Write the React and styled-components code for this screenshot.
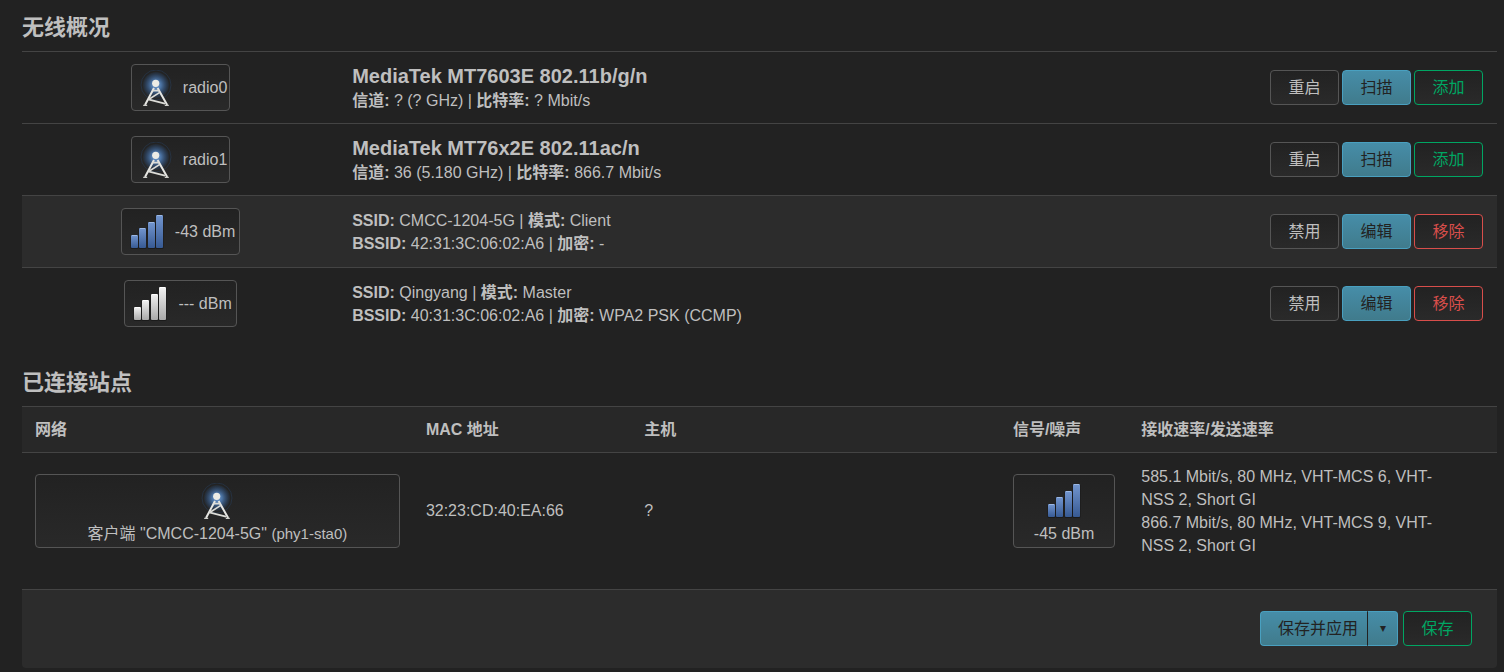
import React, { useId } from 'react';
import styled, { createGlobalStyle } from 'styled-components';

const GlobalStyle = createGlobalStyle`
  * {
    box-sizing: border-box;
  }

  body {
    margin: 0;
    background: #222;
    color: #bfbfbf;
    font-family: "Liberation Sans", "Noto Sans CJK SC", sans-serif;
    font-size: 16px;
    line-height: 23px;
  }
`

const Page = styled.main`
  padding: 0 7px 4px 22px;
`

const Title = styled.h3`
  margin: 0;
  padding: ${props => props.$first ? '12px' : '28px'} 0 8px;
  font-size: 22px;
  line-height: 31px;
  font-weight: bold;
`

const Table = styled.table`
  width: 100%;
  border-collapse: separate;
  border-spacing: 0;
  table-layout: fixed;
`

const Col = styled.col`
  width: ${props => props.$width};
`

const WifiRow = styled.tr`
  height: 72px;
  background: ${props => props.$raised ? '#2c2c2c' : 'transparent'};
`

const Cell = styled.td`
  padding: 0 13px;
  border-top: 1px solid #444;
  text-align: ${props => props.$align || 'left'};
  vertical-align: middle;
`

const HeadCell = styled.th`
  height: 46px;
  padding: 0 13px;
  border-top: 1px solid #444;
  background: #282828;
  text-align: left;
  font-weight: bold;
`

const StationCell = styled(Cell)`
  height: 116px;
`

const RateCell = styled(StationCell)`
  padding-right: 44px;
`

const Badge = styled.span`
  display: inline-flex;
  align-items: center;
  gap: 11px;
  height: 47px;
  padding: 0 ${props => props.$end} 0 8px;
  border: 1px solid #555;
  border-radius: 4px;
  background: linear-gradient(#222, #292929);
  vertical-align: middle;
  white-space: nowrap;
`

const TallBadge = styled.span`
  display: flex;
  flex-direction: column;
  align-items: center;
  gap: 3px;
  height: 74px;
  padding-top: 8px;
  border: 1px solid #555;
  border-radius: 4px;
  background: linear-gradient(#222, #292929);
  white-space: nowrap;
`

const Small = styled.span`
  font-size: 15px;
`

const Device = styled.div`
  font-size: 20px;
  line-height: 25px;
  font-weight: bold;
`

const Actions = styled.div`
  display: flex;
  justify-content: flex-end;
  gap: 3px;
  padding-right: 1px;
`

const Button = styled.button`
  width: 69px;
  height: 35px;
  padding: 0;
  border: 1px solid #555;
  border-radius: 4px;
  background: linear-gradient(#222, #2a2a2a);
  color: #bfbfbf;
  font: inherit;
  line-height: 31px;
  white-space: nowrap;
  cursor: pointer;
`

const PrimaryButton = styled(Button)`
  border-color: #49a0c0;
  background: linear-gradient(#468da8, #407b8c);
  color: #222;
`

const PositiveButton = styled(Button)`
  border-color: #00a663;
  color: #00a663;
`

const NegativeButton = styled(Button)`
  border-color: #d84e4b;
  color: #d84e4b;
`

const PageActions = styled.div`
  display: flex;
  justify-content: flex-end;
  gap: 5px;
  margin-top: 21px;
  padding: 21px 25px 22px;
  border-top: 1px solid #444;
  border-radius: 0 0 4px 4px;
  background: #2c2c2c;
`

const SplitButton = styled.div`
  display: flex;
`

const ApplyButton = styled(PrimaryButton)`
  width: auto;
  padding: 0 9px 0 17px;
  border-right: 1px solid #222;
  border-radius: 4px 0 0 4px;
`

const MenuButton = styled(PrimaryButton)`
  width: 30px;
  border-left: 0;
  border-radius: 0 4px 4px 0;
  font-size: 12px;
`

function Antenna() {
  const id = useId();
  return (
    <svg width="32" height="36" viewBox="0 -2 32 36" fill="none" aria-hidden="true">
      <defs>
        <radialGradient id={id}>
          <stop offset="0" stopColor="#7ba6dc" />
          <stop offset="0.4" stopColor="#4f7bb0" stopOpacity="0.9" />
          <stop offset="0.75" stopColor="#345580" stopOpacity="0.6" />
          <stop offset="1" stopColor="#274468" stopOpacity="0.2" />
        </radialGradient>
      </defs>
      <circle cx="16" cy="13" r="13" fill={`url(#${id})`} />
      <circle cx="16" cy="13" r="15" stroke="#284b76" strokeOpacity="0.35" />
      <path d="M14 16 5 33M17.6 16l9.6 17" stroke="#e6e6e2" strokeWidth="2" />
      <path d="M3.2 33.3h4M24.8 33.3h4" stroke="#d0d0cb" strokeWidth="1.2" />
      <path d="M12.4 18.6h7M19.8 20.4 9.4 27M8.2 27.4l16.8 4.2" stroke="#dcdcd7" strokeWidth="1.6" />
      <circle cx="15.7" cy="11.3" r="3.6" fill="#ecece6" />
    </svg>
  )
}

const barShapes = [
  { x: 1, y: 21 },
  { x: 9, y: 14 },
  { x: 18, y: 8 },
  { x: 26, y: 1 },
];

function SignalBars({ active }) {
  const id = useId();
  return (
    <svg width="34" height="36" viewBox="0 0 34 36" aria-hidden="true">
      <defs>
        <linearGradient id={id} x1="0" y1="0" x2="0" y2="1">
          <stop offset="0" stopColor={active ? '#7396cf' : '#f2f2f2'} />
          <stop offset="1" stopColor={active ? '#375a93' : '#a9a9a9'} />
        </linearGradient>
      </defs>
      {barShapes.map(({ x, y }) => (
        <g key={x}>
          <rect x={x - 0.5} y={y + 0.5} width="8" height={34.5 - y} rx="1.5" fill="#111" fillOpacity="0.55" />
          <rect x={x} y={y} width="7" height={34 - y} rx="1" fill={`url(#${id})`} />
          <rect x={x + 1} y={y} width="5" height="1" fill={active ? '#9cb8e3' : '#fff'} />
        </g>
      ))}
    </svg>
  )
}

const radios = [
  { name: 'radio0', device: 'MediaTek MT7603E 802.11b/g/n', channel: '? (? GHz)', bitrate: '? Mbit/s' },
  { name: 'radio1', device: 'MediaTek MT76x2E 802.11ac/n', channel: '36 (5.180 GHz)', bitrate: '866.7 Mbit/s' },
];

const networks = [
  { signal: '-43 dBm', active: true, ssid: 'CMCC-1204-5G', mode: 'Client', bssid: '42:31:3C:06:02:A6', encryption: '-' },
  { signal: '--- dBm', active: false, ssid: 'Qingyang', mode: 'Master', bssid: '40:31:3C:06:02:A6', encryption: 'WPA2 PSK (CCMP)' },
];

function RadioRow({ name, device, channel, bitrate }) {
  return (
    <WifiRow>
      <Cell $align="center">
        <Badge $end="2px"><Antenna />{name}</Badge>
      </Cell>
      <Cell>
        <Device>{device}</Device>
        <div><b>信道:</b> {channel} | <b>比特率:</b> {bitrate}</div>
      </Cell>
      <Cell>
        <Actions>
          <Button>重启</Button>
          <PrimaryButton>扫描</PrimaryButton>
          <PositiveButton>添加</PositiveButton>
        </Actions>
      </Cell>
    </WifiRow>
  )
}

function NetworkRow({ signal, active, ssid, mode, bssid, encryption }) {
  return (
    <WifiRow $raised={active}>
      <Cell $align="center">
        <Badge $end="4px"><SignalBars active={active} />{signal}</Badge>
      </Cell>
      <Cell>
        <div><b>SSID:</b> {ssid} | <b>模式:</b> {mode}</div>
        <div><b>BSSID:</b> {bssid} | <b>加密:</b> {encryption}</div>
      </Cell>
      <Cell>
        <Actions>
          <Button>禁用</Button>
          <PrimaryButton>编辑</PrimaryButton>
          <NegativeButton>移除</NegativeButton>
        </Actions>
      </Cell>
    </WifiRow>
  )
}

function App() {
  return (
    <Page>
      <GlobalStyle />
      <Title $first>无线概况</Title>
      <Table>
        <colgroup>
          <Col $width="21.5%" />
          <Col />
          <Col $width="240px" />
        </colgroup>
        <tbody>
          {radios.map(radio => <RadioRow key={radio.name} {...radio} />)}
          {networks.map(network => <NetworkRow key={network.ssid} {...network} />)}
        </tbody>
      </Table>

      <Title>已连接站点</Title>
      <Table>
        <colgroup>
          <Col $width="26.5%" />
          <Col $width="14.8%" />
          <Col $width="25%" />
          <Col $width="8.7%" />
          <Col $width="25%" />
        </colgroup>
        <thead>
          <tr>
            <HeadCell>网络</HeadCell>
            <HeadCell>MAC 地址</HeadCell>
            <HeadCell>主机</HeadCell>
            <HeadCell>信号/噪声</HeadCell>
            <HeadCell>接收速率/发送速率</HeadCell>
          </tr>
        </thead>
        <tbody>
          <tr>
            <StationCell>
              <TallBadge>
                <Antenna />
                <span>客户端 "CMCC-1204-5G" <Small>(phy1-sta0)</Small></span>
              </TallBadge>
            </StationCell>
            <StationCell>32:23:CD:40:EA:66</StationCell>
            <StationCell>?</StationCell>
            <StationCell>
              <TallBadge>
                <SignalBars active />
                <span>-45 dBm</span>
              </TallBadge>
            </StationCell>
            <RateCell>
              585.1 Mbit/s, 80 MHz, VHT-MCS 6, VHT-NSS 2, Short GI
              <br />
              866.7 Mbit/s, 80 MHz, VHT-MCS 9, VHT-NSS 2, Short GI
            </RateCell>
          </tr>
        </tbody>
      </Table>

      <PageActions>
        <SplitButton>
          <ApplyButton>保存并应用</ApplyButton>
          <MenuButton aria-label="更多选项">▾</MenuButton>
        </SplitButton>
        <PositiveButton>保存</PositiveButton>
      </PageActions>
    </Page>
  )
}

export default App;
